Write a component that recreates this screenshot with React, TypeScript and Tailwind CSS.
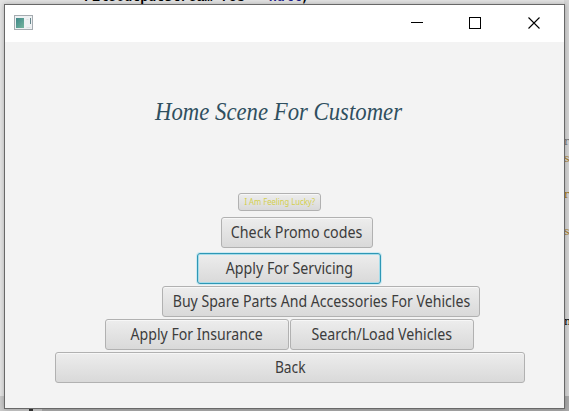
import React from "react";

type ButtonProps = {
  label: string;
  className: string;
  textClass: string;
  focused?: boolean;
};

const base =
  "flex shrink-0 items-center justify-center whitespace-nowrap rounded-[3px] bg-gradient-to-b from-[#ededed] to-[#d9d9d9] text-[#3c3c3c]";
const idle = "border border-[#b1b1b1] shadow-[inset_0_1px_0_#f7f7f7]";
const focus = "border border-[#2e97b5] shadow-[inset_0_0_0_1px_#a5dcea,0_0_0_1px_#cdeaf2]";

function FxButton({ label, className, textClass, focused = false }: ButtonProps) {
  return (
    <button type="button" className={`${base} ${focused ? focus : idle} ${className}`}>
      <span className={`block ${textClass}`}>{label}</span>
    </button>
  );
}

function TitleBar() {
  return (
    <header className="flex h-[37px] shrink-0 items-start justify-between bg-white pl-[9px] pr-[23px]">
      <svg className="mt-[10px]" width="20" height="16" viewBox="0 0 20 16">
        <defs>
          <linearGradient id="pane" x1="0" y1="0" x2="1" y2="1">
            <stop offset="0" stopColor="#3f8788" />
            <stop offset="1" stopColor="#74b59e" />
          </linearGradient>
        </defs>
        <rect x="0.5" y="0.5" width="18" height="14" fill="#eef1f3" stroke="#a5abb0" />
        <rect x="2" y="3" width="8" height="10" fill="url(#pane)" />
        <path d="M12.500 4.500h2M12.500 12.500h4" stroke="#dde1e3" />
        <path d="M16.500 3v6" stroke="#65858b" />
      </svg>
      <svg className="mt-[12px]" width="130" height="13" viewBox="0 0 130 13" fill="none" stroke="#000">
        <path d="M0 5.500h12" />
        <rect x="58.500" y="0.500" width="11" height="11" />
        <path d="M117.500 0.500l11 11M128.500 0.500l-11 11" strokeWidth="1.100" />
      </svg>
    </header>
  );
}

export default function App() {
  return (
    <div className="relative h-[411px] w-[569px] overflow-hidden bg-[#e3e3e3] font-['Noto_Sans','Open_Sans',sans-serif]">
      {/* Code editor behind the window */}
      <pre className="absolute -top-[9px] left-[84px] font-['Liberation_Mono',monospace] text-[13.4px] font-bold leading-[14px] text-black">
        FileOutputStream fos = <span className="text-[#1c1c8c]">null</span>;
      </pre>
      <div className="absolute right-0 top-0 h-[396px] w-[5px] bg-[#d4d4d4]" />
      <div className="absolute bottom-0 left-0 h-[15px] w-full bg-[#aaaaaa]" />
      <div className="absolute bottom-0 left-0 h-[15px] w-[42px] bg-[#c9c9c9]" />
      <div className="absolute left-[29px] top-[409px] h-[2px] w-[4px] bg-[#333333]" />
      <div className="absolute left-[564px] top-0 font-['DejaVu_Serif',serif] text-[11px] leading-[14px]">
        <span className="absolute top-[135px] text-[#777777]">r</span>
        <span className="absolute top-[152px] text-[#a47a1d]">s</span>
        <span className="absolute top-[188px] text-[#a47a1d]">r</span>
        <span className="absolute top-[225px] text-[#a47a1d]">s</span>
        <span className="absolute top-[315px] text-black">n</span>
      </div>

      <main className="absolute left-[4px] top-[4px] flex h-[405px] w-[561px] flex-col border border-[#686868] bg-[#f3f3f3] shadow-[0_0_5px_rgba(0,0,0,0.25)]">
        <TitleBar />
        <h1 className="ml-[150px] mt-[51px] h-[36px] w-max origin-left scale-x-[0.875] whitespace-nowrap font-['Liberation_Serif',serif] text-[26px] italic leading-[38px] text-[#2f4f5f]">
          Home Scene For Customer
        </h1>
        <div className="mt-[64px] flex flex-col items-start">
          <FxButton
            label="I Am Feeling Lucky?"
            className="ml-[233px] h-[18px] w-[83px]"
            textClass="text-[8px] text-[#d3cf4d] scale-x-[0.96]"
          />
          <FxButton
            label="Check Promo codes"
            className="ml-[216px] mt-[6px] h-[31px] w-[152px]"
            textClass="text-[15.5px] scale-x-[0.919]"
          />
          <FxButton
            label="Apply For Servicing"
            className="ml-[192px] mt-[5px] h-[31px] w-[184px]"
            textClass="text-[15.5px] scale-x-[0.917]"
            focused
          />
          <FxButton
            label="Buy Spare Parts And Accessories For Vehicles"
            className="ml-[157px] mt-[2px] h-[31px] w-[318px]"
            textClass="text-[15.5px] scale-x-[0.91]"
          />
          <div className="ml-[100px] mt-[2px] flex gap-px">
            <FxButton label="Apply For Insurance" className="h-[31px] w-[184px]" textClass="text-[15.5px] scale-x-[0.91]" />
            <FxButton label="Search/Load Vehicles" className="h-[31px] w-[184px]" textClass="text-[15.5px] scale-x-[0.915]" />
          </div>
          <FxButton label="Back" className="ml-[50px] mt-[2px] h-[31px] w-[470px]" textClass="text-[15.5px] scale-x-[0.89]" />
        </div>
      </main>
    </div>
  );
}
